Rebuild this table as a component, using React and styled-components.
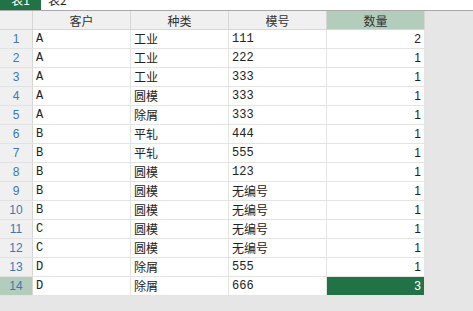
import styled, { createGlobalStyle } from 'styled-components';

const rows = [
  ['A', '工业', '111', 2],
  ['A', '工业', '222', 1],
  ['A', '工业', '333', 1],
  ['A', '圆模', '333', 1],
  ['A', '除屑', '333', 1],
  ['B', '平轧', '444', 1],
  ['B', '平轧', '555', 1],
  ['B', '圆模', '123', 1],
  ['B', '圆模', '无编号', 1],
  ['B', '圆模', '无编号', 1],
  ['C', '圆模', '无编号', 1],
  ['C', '圆模', '无编号', 1],
  ['D', '除屑', '555', 1],
  ['D', '除屑', '666', 3],
];

const headers = ['客户', '种类', '模号', '数量'];
const selectedRow = 13;

const App = () => (
  <>
    <GlobalStyle />
    <Root>
      <TabBar>
        <Tab active>表1</Tab>
        <Tab>表2</Tab>
      </TabBar>
      <Sheet>
        <Grid>
          <thead>
            <tr>
              <Corner />
              {headers.map((h, i) => (
                <HeadCell key={h} selected={i === 3}>
                  {h}
                </HeadCell>
              ))}
            </tr>
          </thead>
          <tbody>
            {rows.map((r, i) => (
              <tr key={i}>
                <RowNum selected={i === selectedRow}>{i + 1}</RowNum>
                <Cell>{r[0]}</Cell>
                <Cell>{r[1]}</Cell>
                <Cell>{r[2]}</Cell>
                <Cell numeric selected={i === selectedRow}>
                  {r[3]}
                </Cell>
              </tr>
            ))}
          </tbody>
        </Grid>
      </Sheet>
    </Root>
  </>
);

const GlobalStyle = createGlobalStyle`
  html, body {
    margin: 0;
    padding: 0;
    background: #e6e6e6;
  }
  body {
    font-family: "Liberation Mono", "Noto Sans CJK SC", monospace;
    font-size: 12px;
    color: #222;
  }
`;

const Root = styled.div`
  width: 473px;
  height: 311px;
  overflow: hidden;
  background: #e6e6e6;
`;

const TabBar = styled.div`
  display: flex;
  align-items: flex-end;
  height: 10px;
  overflow: hidden;
  background: #fff;
  border-bottom: 1px solid #a8a8a8;
`;

const Tab = styled.div`
  flex-shrink: 0;
  width: ${({ active }) => (active ? '41px' : 'auto')};
  height: 20px;
  line-height: 20px;
  padding: 0 ${({ active }) => (active ? '0' : '7px')};
  text-align: center;
  font-family: "Noto Sans CJK SC", sans-serif;
  font-size: 12px;
  color: ${({ active }) => (active ? '#fff' : '#222')};
  background: ${({ active }) => (active ? '#217346' : 'transparent')};
`;

const Sheet = styled.div`
  display: flex;
`;

const Grid = styled.table`
  border-collapse: collapse;
  table-layout: fixed;
  background: #fff;

  td, th {
    height: 18px;
    padding: 0;
    white-space: nowrap;
    overflow: hidden;
  }
`;

const Corner = styled.th`
  width: 32px;
  background: #f0f0f0;
  border-right: 1px solid #d6d6d6;
  border-bottom: 1px solid #d6d6d6;
`;

const HeadCell = styled.th`
  width: 97px;
  font-family: "Noto Sans CJK SC", sans-serif;
  font-weight: normal;
  font-size: 12px;
  color: #333;
  text-align: center;
  background: ${({ selected }) => (selected ? '#b3cdbd' : '#f0f0f0')};
  border-right: 1px solid #d6d6d6;
  border-bottom: 1px solid #d6d6d6;
`;

const RowNum = styled.td`
  width: 32px;
  text-align: center;
  font-family: "Liberation Sans", sans-serif;
  font-size: 12px;
  color: #3c78b4;
  background: ${({ selected }) => (selected ? '#b3cdbd' : '#f0f0f0')};
  border-right: 1px solid #d6d6d6;
  border-bottom: 1px solid #e2e2e2;
`;

const Cell = styled.td`
  padding: 0 3px !important;
  text-align: ${({ numeric }) => (numeric ? 'right' : 'left')};
  font-family: ${({ numeric }) =>
    numeric ? '"Liberation Sans", sans-serif' : '"Liberation Mono", "Noto Sans CJK SC", monospace'};
  font-size: 12px;
  color: ${({ selected }) => (selected ? '#fff' : '#222')};
  background: ${({ selected }) => (selected ? '#217346' : '#fff')};
  border-right: 1px solid #e4e4e4;
  border-bottom: 1px solid #e4e4e4;
`;

export default App;
